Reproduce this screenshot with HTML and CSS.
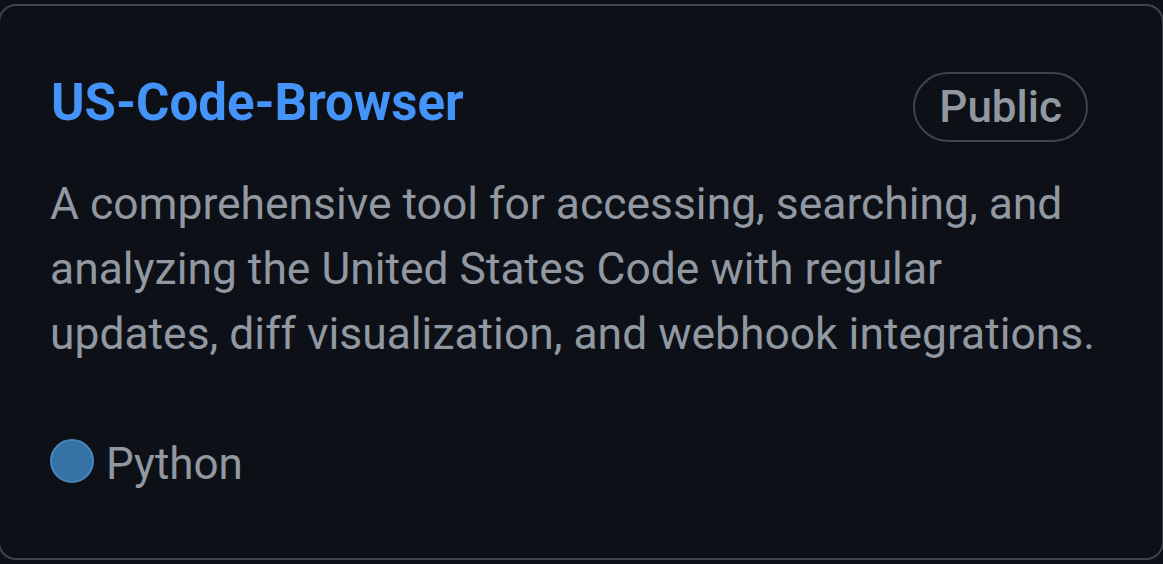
FILE: index.html
```html
<!DOCTYPE html>
<html>
<head>
  <meta http-equiv="Content-Type" content="text/html; charset=utf-8" />
  <title>US-Code-Browser</title>
<link rel="stylesheet" href="styles.css">
</head>
<body>

<div class="card">
  <div class="card-head">
    <a class="repo-name" href="#">US-Code-Browser</a>
    <span class="badge">Public</span>
  </div>
  <p class="repo-desc">A comprehensive tool for accessing, searching, and analyzing the United States Code with regular updates, diff visualization, and webhook integrations.</p>
  <div class="repo-meta">
    <span class="lang-dot"></span>
    <span class="lang-name">Python</span>
  </div>
</div>

</body>
</html>
```

FILE: styles.css
```css
html, body {
    margin: 0;
    background-color: #0d1117;
}
body {
    font-family: Roboto, "Noto Sans", sans-serif;
    overflow: hidden;
}

.card {
    box-sizing: border-box;
    margin: 4px 0 0 -2px;
    width: 1166px;
    height: 556px;
    border: 2px solid #3d444d;
    border-radius: 18px;
    padding: 66px 74px 0 50px;
}

.card-head {
    display: flex;
    justify-content: space-between;
    align-items: center;
}
.repo-name {
    margin: 0 0 10px 1px;
    color: #4493f8;
    font-size: 51px;
    font-weight: 700;
    text-decoration: none;
}
.badge {
    border: 2px solid #3d444d;
    border-radius: 40px;
    padding: 0 24px;
    height: 66px;
    line-height: 66px;
    color: #9198a1;
    font-size: 44px;
    font-weight: 500;
}

.repo-desc {
    margin: 30px -24px 0 0;
    color: #9198a1;
    font-size: 44.4px;
    line-height: 65px;
}

.repo-meta {
    display: flex;
    align-items: center;
    gap: 12px;
    margin-top: 71px;
}
.lang-dot {
    width: 40px;
    height: 40px;
    margin-bottom: 6px;
    border-radius: 50%;
    background-color: #3572a5;
    border: 2px solid #4a86bc;
}
.lang-name {
    color: #9198a1;
    font-size: 44px;
}
```
